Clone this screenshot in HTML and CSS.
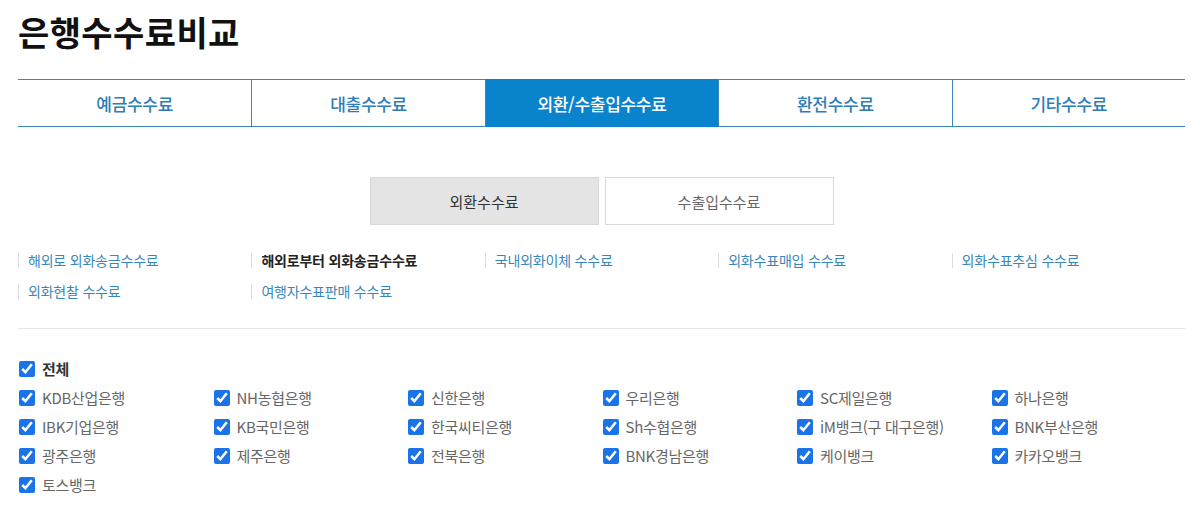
FILE: index.html
```html
<!DOCTYPE html>
<html lang="ko">
<head>
<meta charset="utf-8">
<title>은행수수료비교</title>
<link rel="stylesheet" href="styles.css">
</head>
<body>
<div class="page">
  <h1 class="title">은행수수료비교</h1>

  <nav class="tabs">
    <a class="tab">예금수수료</a>
    <a class="tab">대출수수료</a>
    <a class="tab tab-active">외환/수출입수수료</a>
    <a class="tab">환전수수료</a>
    <a class="tab">기타수수료</a>
  </nav>

  <div class="subtabs">
    <a class="subtab subtab-active">외환수수료</a>
    <a class="subtab">수출입수수료</a>
  </div>

  <ul class="links">
    <li class="link-item"><span class="link">해외로 외화송금수수료</span></li>
    <li class="link-item"><span class="link link-active">해외로부터 외화송금수수료</span></li>
    <li class="link-item"><span class="link">국내외화이체 수수료</span></li>
    <li class="link-item"><span class="link">외화수표매입 수수료</span></li>
    <li class="link-item"><span class="link">외화수표추심 수수료</span></li>
    <li class="link-item"><span class="link">외화현찰 수수료</span></li>
    <li class="link-item"><span class="link">여행자수표판매 수수료</span></li>
  </ul>

  <div class="banks">
    <label class="bank bank-all"><input type="checkbox" checked><span>전체</span></label>
    <label class="bank"><input type="checkbox" checked><span>KDB산업은행</span></label>
    <label class="bank"><input type="checkbox" checked><span>NH농협은행</span></label>
    <label class="bank"><input type="checkbox" checked><span>신한은행</span></label>
    <label class="bank"><input type="checkbox" checked><span>우리은행</span></label>
    <label class="bank"><input type="checkbox" checked><span>SC제일은행</span></label>
    <label class="bank"><input type="checkbox" checked><span>하나은행</span></label>
    <label class="bank"><input type="checkbox" checked><span>IBK기업은행</span></label>
    <label class="bank"><input type="checkbox" checked><span>KB국민은행</span></label>
    <label class="bank"><input type="checkbox" checked><span>한국씨티은행</span></label>
    <label class="bank"><input type="checkbox" checked><span>Sh수협은행</span></label>
    <label class="bank"><input type="checkbox" checked><span>iM뱅크(구 대구은행)</span></label>
    <label class="bank"><input type="checkbox" checked><span>BNK부산은행</span></label>
    <label class="bank"><input type="checkbox" checked><span>광주은행</span></label>
    <label class="bank"><input type="checkbox" checked><span>제주은행</span></label>
    <label class="bank"><input type="checkbox" checked><span>전북은행</span></label>
    <label class="bank"><input type="checkbox" checked><span>BNK경남은행</span></label>
    <label class="bank"><input type="checkbox" checked><span>케이뱅크</span></label>
    <label class="bank"><input type="checkbox" checked><span>카카오뱅크</span></label>
    <label class="bank"><input type="checkbox" checked><span>토스뱅크</span></label>
  </div>
</div>
</body>
</html>
```

FILE: styles.css
```css
* { box-sizing: border-box; }

body {
  margin: 0;
  background: #fff;
  font-family: "Noto Sans CJK KR", "Noto Sans", sans-serif;
  color: #333;
}

.page {
  width: 1167px;
  margin-left: 18px;
}

.title {
  margin: 11px 0 0;
  font-size: 34px;
  line-height: 42px;
  font-weight: 700;
  color: #111;
  letter-spacing: 0.4px;
}

.tabs {
  margin-top: 26px;
  display: grid;
  grid-template-columns: repeat(5, 1fr);
  border-top: 1px solid #3c86ba;
  border-bottom: 1px solid #3c86ba;
  height: 48px;
}

.tab {
  display: flex;
  align-items: center;
  justify-content: center;
  font-size: 17px;
  font-weight: 500;
  color: #2f7db5;
  border-left: 1px solid #3c86ba;
  letter-spacing: -0.3px;
}

.tab:first-child { border-left: none; }

.tab-active {
  background: #0a83cd;
  color: #fff;
  margin-top: -1px;
  margin-bottom: -1px;
}

.subtabs {
  margin-top: 50px;
  display: flex;
  justify-content: center;
  gap: 6px;
}

.subtab {
  width: 229px;
  height: 48px;
  display: flex;
  align-items: center;
  justify-content: center;
  border: 1px solid #d9d9d9;
  background: #fff;
  font-size: 15px;
  color: #666;
}

.subtab-active {
  background: #e4e4e4;
  color: #333;
}

.links {
  list-style: none;
  margin: 20px 0 0;
  padding: 0 0 21px;
  display: grid;
  grid-template-columns: repeat(5, 1fr);
  border-bottom: 1px solid #e6e6e6;
}

.link-item {
  height: 31px;
  display: flex;
  align-items: center;
}

.link {
  border-left: 1px solid #dcdcdc;
  padding-left: 9px;
  line-height: 15px;
  font-size: 14px;
  color: #3987b8;
  letter-spacing: -0.2px;
}

.link-active {
  color: #222;
  font-weight: 700;
}

.banks {
  margin-top: 25px;
  display: grid;
  grid-template-columns: repeat(6, 1fr);
}

.bank {
  height: 29px;
  display: flex;
  align-items: center;
  gap: 7px;
  padding-left: 1px;
  font-size: 15px;
  color: #666;
  letter-spacing: -0.3px;
}

.bank input {
  width: 16px;
  height: 16px;
  margin: 0;
  accent-color: #1a73e8;
}

.bank-all {
  grid-column: 1 / -1;
  font-weight: 700;
  color: #333;
}
```
